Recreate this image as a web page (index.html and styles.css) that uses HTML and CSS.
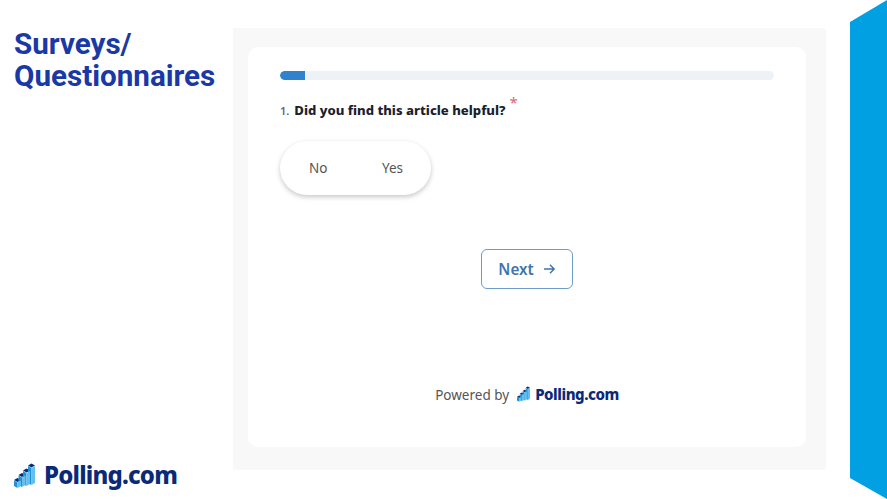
FILE: index.html
```html
<!DOCTYPE html>
<html lang="en">
<head>
  <meta charset="UTF-8" />
  <meta name="viewport" content="width=device-width, initial-scale=1" />
  <title>Surveys/Questionnaires</title>
  <link rel="stylesheet" href="styles.css">
</head>
<body>
  <svg class="icon-defs" aria-hidden="true">
    <symbol id="stairs" viewBox="0 0 21 25">
      <g class="stairs-top">
        <path d="M14 2.500 17.500 0.500 21 2.500 17.500 4.500z"/>
        <path d="M9 7.500 12.500 5.500 16 7.500 12.500 9.500z"/>
        <path d="M4.500 12 8 10 11.500 12 8 14z"/>
        <path d="M0 17 3.500 15 7 17 3.500 19z"/>
      </g>
      <g class="stairs-left">
        <path d="M14 3 17.500 5V22L14 20z"/>
        <path d="M9 8 12.500 10V23L9 21z"/>
        <path d="M4.500 12.500 8 14.500V24L4.500 22z"/>
        <path d="M0 17.500 3.500 19.500V25L0 23z"/>
      </g>
      <g class="stairs-right">
        <path d="M17.500 5 21 3V20L17.500 22z"/>
        <path d="M12.500 10 16 8V21L12.500 23z"/>
        <path d="M8 14.500 11.500 12.500V22L8 24z"/>
        <path d="M3.500 19.500 7 17.500V23L3.500 25z"/>
      </g>
    </symbol>
  </svg>

  <div class="slide">
    <aside class="sidebar">
      <h1>Surveys/<br>Questionnaires</h1>
      <div class="brand brand-large">
        <svg class="brand-icon"><use href="#stairs"/></svg>
        <span>Polling.com</span>
      </div>
    </aside>

    <main class="panel">
      <section class="card">
        <div class="progress"><div class="progress-fill"></div></div>

        <p class="question">
          <span class="question-num">1.</span>
          <strong>Did you find this article helpful?</strong>
          <span class="required">*</span>
        </p>

        <div class="choices">
          <span>No</span>
          <span>Yes</span>
        </div>

        <div class="actions">
          <button type="button" class="next-btn">
            Next
            <svg viewBox="0 0 14 12" aria-hidden="true">
              <path d="M1 6h11M7.500 1.500 12 6l-4.500 4.500"/>
            </svg>
          </button>
        </div>

        <div class="powered">
          <span>Powered by</span>
          <div class="brand brand-small">
            <svg class="brand-icon"><use href="#stairs"/></svg>
            <span>Polling.com</span>
          </div>
        </div>
      </section>
    </main>

    <div class="band"></div>
  </div>
</body>
</html>
```

FILE: styles.css
```css
* {
  margin: 0;
  padding: 0;
  box-sizing: border-box;
}

body {
  background: #fff;
  font-family: "Noto Sans", "Open Sans", sans-serif;
  overflow: hidden;
}

.icon-defs {
  display: none;
}

.stairs-top {
  fill: #0a2a78;
}

.stairs-left {
  fill: #1f8fd6;
}

.stairs-right {
  fill: #63c0ee;
}

.slide {
  display: flex;
  width: 887px;
  height: 499px;
}

.sidebar {
  width: 233px;
  flex-shrink: 0;
  display: flex;
  flex-direction: column;
  justify-content: space-between;
  padding: 28px 0 8px 14px;
}

h1 {
  color: #1a39a5;
  font-family: "Roboto", sans-serif;
  font-size: 29.600px;
  line-height: 32px;
  font-weight: 700;
}

.brand {
  display: flex;
  align-items: center;
  color: #0a2a78;
  font-family: "Noto Sans", sans-serif;
  font-weight: 800;
}

.brand-large {
  gap: 9px;
  font-size: 24px;
  line-height: 32px;
  letter-spacing: -0.800px;
}

.brand-large .brand-icon {
  width: 21px;
  height: 25px;
}

.brand-small {
  gap: 5px;
  font-size: 15px;
  line-height: 20px;
  letter-spacing: -0.450px;
  margin-bottom: 2px;
}

.brand-small .brand-icon {
  width: 13px;
  height: 16px;
}

.panel {
  width: 593px;
  height: 442px;
  margin-top: 28px;
  flex-shrink: 0;
  background: #f8f8f8;
  border-radius: 0 4px 4px 0;
  padding: 19px 20px 23px 15px;
}

.card {
  height: 100%;
  background: #fff;
  border-radius: 10px;
  padding: 24px 32px 0;
  display: flex;
  flex-direction: column;
}

.progress {
  height: 9px;
  background: #eef2f7;
  border-radius: 5px;
  overflow: hidden;
}

.progress-fill {
  width: 25px;
  height: 100%;
  background: #3182ce;
  border-radius: 5px 0 0 5px;
}

.question {
  display: flex;
  align-items: baseline;
  margin-top: 19px;
  font-size: 13.100px;
  line-height: 20px;
  color: #1a202c;
}

.question strong {
  font-weight: 800;
}

.question-num {
  color: #666;
  font-size: 11px;
  font-weight: 600;
  margin-right: 5px;
}

.required {
  color: #e2607a;
  font-size: 15px;
  margin-left: 4px;
  transform: translateY(-7px);
}

.choices {
  width: 151px;
  height: 54px;
  margin-top: 20px;
  border-radius: 27px;
  background: #fff;
  box-shadow: 0 2px 5px rgba(0, 0, 0, 0.22);
  display: flex;
  align-items: center;
  justify-content: space-between;
  padding: 0 28px 0 29px;
  font-size: 13.500px;
  color: #555;
}

.actions {
  display: flex;
  justify-content: center;
  margin-top: 54px;
}

.next-btn {
  width: 92px;
  height: 40px;
  display: flex;
  align-items: center;
  justify-content: center;
  gap: 9px;
  background: #fff;
  border: 1.500px solid #6d9ccb;
  border-radius: 6px;
  color: #3e74ad;
  font-family: inherit;
  font-size: 15.200px;
  font-weight: 600;
}

.next-btn svg {
  width: 13px;
  height: 12px;
  fill: none;
  stroke: #3e74ad;
  stroke-width: 1.500;
}

.powered {
  display: flex;
  justify-content: center;
  align-items: center;
  gap: 8px;
  margin-top: 95px;
  font-size: 13.500px;
  color: #555;
}

.band {
  width: 37px;
  margin-left: 24px;
  flex-shrink: 0;
  background: #00a0e3;
  clip-path: polygon(0 22px, 100% 0, 100% 100%, 0 478px);
}
```
